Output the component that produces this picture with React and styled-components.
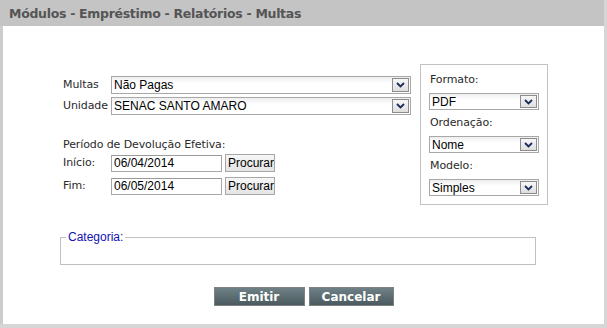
import React from "react";
import styled, { createGlobalStyle } from "styled-components";

const Global = createGlobalStyle`
  html, body { margin: 0; padding: 0; background: #ffffff; }
  * { box-sizing: border-box; }
`;

const Page = styled.div`
  width: 607px;
  height: 328px;
  display: flex;
  flex-direction: column;
  border-right: 3px solid #d6d6d6;
  border-bottom: 4px solid #d6d6d6;
  background: #fff;
`;

const Header = styled.div`
  height: 26px;
  flex: none;
  background: #c4c4c4;
  padding-left: 9px;
  display: flex;
  align-items: center;
  font-family: "DejaVu Sans", Verdana, sans-serif;
  font-weight: bold;
  font-size: 12.5px;
  color: #555555;
  letter-spacing: -0.3px;
`;

const Body = styled.div`
  flex: 1;
  border-left: 3px solid #cdcdcd;
  padding-left: 57px;
  padding-top: 38px;
  display: flex;
  flex-direction: column;
`;

const MainRow = styled.div`
  display: flex;
  align-items: flex-start;
  gap: 9px;
`;

const LeftCol = styled.div`
  width: 351px;
  padding-left: 3px;
  padding-top: 12px;
  display: flex;
  flex-direction: column;
`;

const FieldRow = styled.div`
  display: flex;
  align-items: center;
  margin-top: ${(p) => p.$gap || 0}px;
`;

const Label = styled.span`
  font-family: "DejaVu Sans", Verdana, sans-serif;
  font-size: 11px;
  color: #2a2a2a;
  width: ${(p) => (p.$w ? `${p.$w}px` : "auto")};
  flex: none;
  line-height: 14px;
  padding-left: ${(p) => p.$pl || 0}px;
  letter-spacing: -0.1px;
`;

const SelectBox = styled.div`
  width: ${(p) => p.$w}px;
  height: ${(p) => p.$h || 17}px;
  border: 1px solid #a8a8a8;
  background: linear-gradient(#eeeeee, #ffffff 40%);
  display: flex;
  align-items: center;
  justify-content: space-between;
  padding-left: 2px;
  padding-right: 1px;
  font-family: "Liberation Sans", Arial, sans-serif;
  font-size: 12px;
  color: #000;
  margin-left: ${(p) => p.$ml || 0}px;
`;

const ArrowBtn = styled.span`
  width: 17px;
  height: calc(100% - 2px);
  border: 1px solid #8c8c8c;
  background: linear-gradient(#f7f7f7, #dedede);
  display: flex;
  align-items: center;
  justify-content: center;
`;

const Chevron = () => (
  <svg width="9" height="6" viewBox="0 0 9 6">
    <polyline points="1,1 4.5,4.5 8,1" fill="none" stroke="#1d2b5c" strokeWidth="1.8" />
  </svg>
);

const Select = ({ w, h, ml, children }) => (
  <SelectBox $w={w} $h={h} $ml={ml}>
    <span>{children}</span>
    <ArrowBtn>
      <Chevron />
    </ArrowBtn>
  </SelectBox>
);

const Input = styled.div`
  width: 111px;
  height: 17px;
  border: 1px solid #a8a8a8;
  border-top-color: #9a9a9a;
  display: flex;
  align-items: center;
  padding-left: 2px;
  font-family: "Liberation Sans", Arial, sans-serif;
  font-size: 12px;
  color: #000;
`;

const SmallButton = styled.div`
  width: 50px;
  height: 18px;
  margin-left: 3px;
  border: 1px solid #a8a8a8;
  background: linear-gradient(#f6f6f6, #e4e4e4);
  display: flex;
  align-items: center;
  padding-left: 2px;
  font-family: "Liberation Sans", Arial, sans-serif;
  font-size: 12px;
  color: #000;
  overflow: hidden;
  white-space: nowrap;
`;

const PeriodTitle = styled(Label)`
  margin-top: 23px;
  margin-bottom: 2px;
`;

const OptionsBox = styled.div`
  width: 128px;
  border: 1px solid #c2c2c2;
  padding: 8px 8px 8px 8px;
  display: flex;
  flex-direction: column;
`;

const OptGroup = styled.div`
  display: flex;
  flex-direction: column;
  gap: 6px;
  margin-top: ${(p) => (p.$first ? 0 : 6)}px;
`;

const Fieldset = styled.fieldset`
  width: 476px;
  height: 35px;
  margin: 25px 0 0 0;
  padding: 0;
  border: 1px solid #c0c0c0;
`;

const Legend = styled.legend`
  margin-left: 5px;
  padding: 0 2px;
  font-family: "Liberation Sans", Arial, sans-serif;
  font-size: 12px;
  line-height: 14px;
  color: #1212b0;
`;

const ButtonRow = styled.div`
  display: flex;
  justify-content: center;
  gap: 4px;
  margin-top: 22px;
  margin-left: -57px;
`;

const ActionButton = styled.div`
  width: ${(p) => p.$w}px;
  height: 19px;
  border: 1px solid #808080;
  background: linear-gradient(#6f8186, #4a5a5f);
  display: flex;
  align-items: center;
  justify-content: center;
  font-family: "DejaVu Sans", Verdana, sans-serif;
  font-weight: bold;
  font-size: 12px;
  color: #ffffff;
`;

export default function App() {
  return (
    <>
      <Global />
      <Page>
        <Header>Módulos - Empréstimo - Relatórios - Multas</Header>
        <Body>
          <MainRow>
            <LeftCol>
              <FieldRow>
                <Label $w={48}>Multas</Label>
                <Select w={300} h={18}>Não Pagas</Select>
              </FieldRow>
              <FieldRow $gap={3}>
                <Label $w={48}>Unidade</Label>
                <Select w={300} h={18}>SENAC SANTO AMARO</Select>
              </FieldRow>
              <PeriodTitle>Período de Devolução Efetiva:</PeriodTitle>
              <FieldRow>
                <Label $w={48}>Início:</Label>
                <Input>06/04/2014</Input>
                <SmallButton>Procurar</SmallButton>
              </FieldRow>
              <FieldRow $gap={5}>
                <Label $w={48}>Fim:</Label>
                <Input>06/05/2014</Input>
                <SmallButton>Procurar</SmallButton>
              </FieldRow>
            </LeftCol>
            <OptionsBox>
              <OptGroup $first>
                <Label $pl={1}>Formato:</Label>
                <Select w={110}>PDF</Select>
              </OptGroup>
              <OptGroup>
                <Label $pl={1}>Ordenação:</Label>
                <Select w={110}>Nome</Select>
              </OptGroup>
              <OptGroup>
                <Label $pl={1}>Modelo:</Label>
                <Select w={110}>Simples</Select>
              </OptGroup>
            </OptionsBox>
          </MainRow>
          <Fieldset>
            <Legend>Categoria:</Legend>
          </Fieldset>
          <ButtonRow>
            <ActionButton $w={91}>Emitir</ActionButton>
            <ActionButton $w={85}>Cancelar</ActionButton>
          </ButtonRow>
        </Body>
      </Page>
    </>
  );
}
